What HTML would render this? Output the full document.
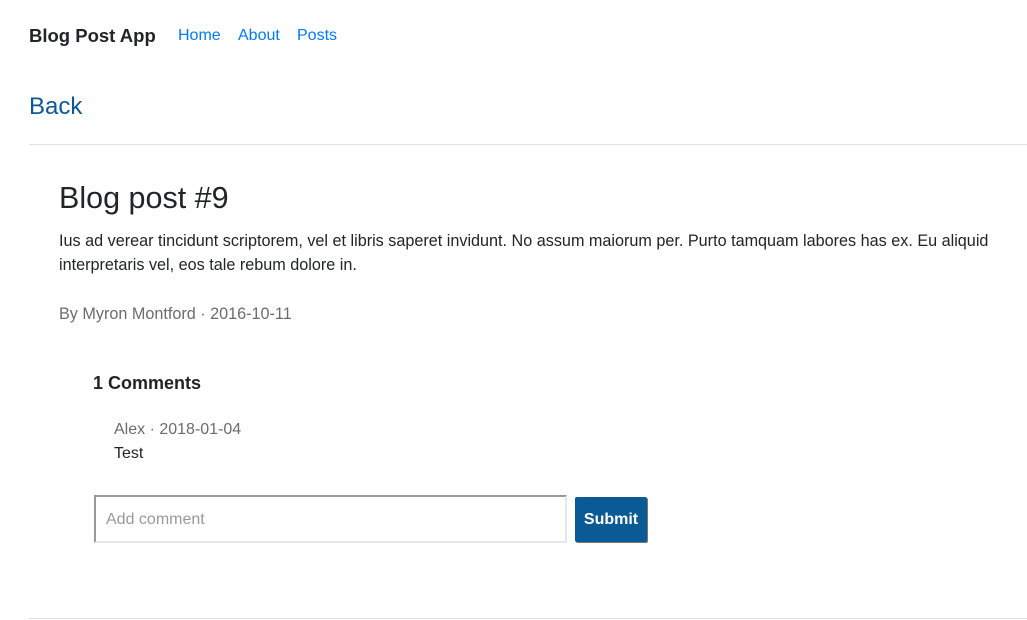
<!DOCTYPE html>
<html><head><meta charset="utf-8"><style>
body{margin:0;width:1027px;height:620px;overflow:hidden;background:#fff;font-family:"Liberation Sans",sans-serif;color:#212529;position:relative}
.a{position:absolute;white-space:nowrap}
.nav{color:#007bff;font-size:16px}
</style></head><body>
<div class="a" style="left:29px;top:24px;font-size:18.5px;line-height:24px;font-weight:bold">Blog Post App</div>
<div class="a nav" style="left:178px;top:26px;line-height:20px">Home</div>
<div class="a nav" style="left:238px;top:26px;line-height:20px">About</div>
<div class="a nav" style="left:297px;top:26px;line-height:20px">Posts</div>
<div class="a" style="left:29px;top:92px;font-size:24px;line-height:30px;color:#0a5a96">Back</div>
<div class="a" style="left:29px;top:144px;width:998px;height:1px;background:#e2e2e2"></div>
<div class="a" style="left:59px;top:181px;font-size:30.5px;line-height:34px">Blog post #9</div>
<div class="a" style="left:59px;top:229px;font-size:16.2px;line-height:24px;white-space:normal;width:960px">Ius ad verear tincidunt scriptorem, vel et libris saperet invidunt. No assum maiorum per. Purto tamquam labores has ex. Eu aliquid interpretaris vel, eos tale rebum dolore in.</div>
<div class="a" style="left:59px;top:304px;font-size:16.2px;line-height:20px;color:#6c6c6c">By Myron Montford · 2016-10-11</div>
<div class="a" style="left:93px;top:371px;font-size:18px;line-height:24px;font-weight:bold">1 Comments</div>
<div class="a" style="left:114px;top:420px;font-size:16px;line-height:20px;color:#6c6c6c">Alex · 2018-01-04</div>
<div class="a" style="left:114px;top:444px;font-size:16px;line-height:20px">Test</div>
<div class="a" style="left:94px;top:495px;height:44px;border:2px solid #e8e8e8;border-top-color:#999;border-left-color:#999;font-size:16px;line-height:46px;color:#999;padding-left:10px;width:459px">Add comment</div>
<div class="a" style="left:575px;top:497px;width:72px;height:45px;background:#0a5a96;border-radius:2px;color:#fff;font-size:16px;line-height:45px;text-align:center;box-shadow:1px 1px 0 #777;font-weight:bold">Submit</div>
<div class="a" style="left:29px;top:618px;width:998px;height:1px;background:#e2e2e2"></div>
</body></html>
